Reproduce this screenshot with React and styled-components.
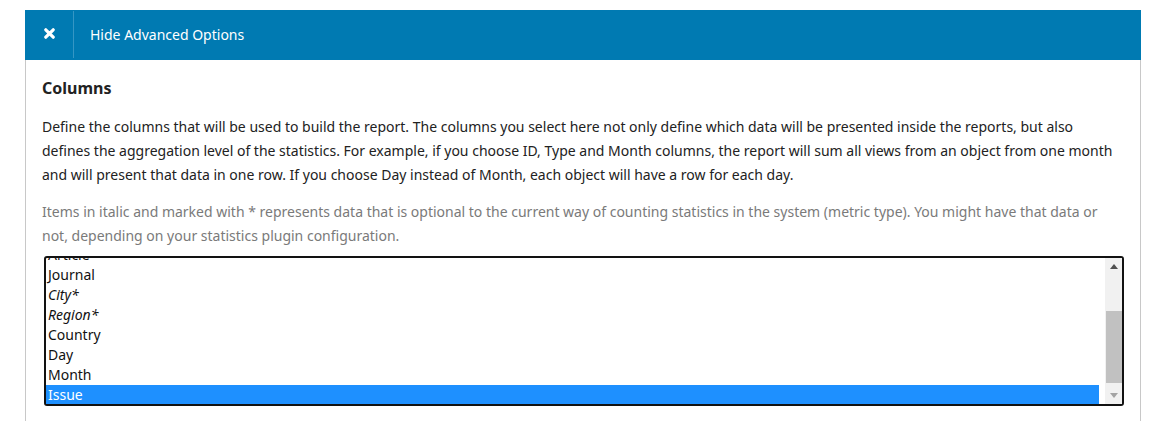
import React, { useLayoutEffect, useRef, useState } from 'react';
import styled, { createGlobalStyle } from 'styled-components';

const columns = [
    { label: 'ID' },
    { label: 'Type' },
    { label: 'Section' },
    { label: 'Article' },
    { label: 'Journal' },
    { label: 'City*', optional: true },
    { label: 'Region*', optional: true },
    { label: 'Country' },
    { label: 'Day' },
    { label: 'Month' },
    { label: 'Issue', selected: true },
];

const ROW = 20;
const ARROW = 17;
const TRACK_END = 4;

const ColumnsList = () => {
    const listRef = useRef(null);
    const [scroll, setScroll] = useState({ top: 0, view: 1, total: 1 });

    useLayoutEffect(() => {
        const el = listRef.current;
        // selected item sits at the bottom, one pixel short of the end
        el.scrollTop = el.scrollHeight - el.clientHeight - 1;
        setScroll({ top: el.scrollTop, view: el.clientHeight, total: el.scrollHeight });
    }, []);

    const track = scroll.view - ARROW * 2 - TRACK_END;
    const thumbHeight = Math.max(20, (track * scroll.view) / scroll.total);
    const maxScroll = scroll.total - scroll.view || 1;
    const thumbTop = ((track - thumbHeight) * scroll.top) / maxScroll;

    return (
        <ListBox>
            <Options ref={listRef}>
                {columns.map(col => (
                    <Option key={col.label} $italic={col.optional} $selected={col.selected}>
                        {col.label}
                    </Option>
                ))}
            </Options>
            <ScrollBar>
                <ArrowButton>
                    <svg width='8' height='5' viewBox='0 0 8 5'>
                        <polygon points='0,5 8,5 4,0' fill='#505050' />
                    </svg>
                </ArrowButton>
                <Track>
                    <Thumb style={{ top: thumbTop, height: thumbHeight }} />
                </Track>
                <ArrowButton>
                    <svg width='8' height='5' viewBox='0 0 8 5'>
                        <polygon points='0,0 8,0 4,5' fill='#a3a3a3' />
                    </svg>
                </ArrowButton>
            </ScrollBar>
        </ListBox>
    );
};

const App = () => {
    return (
        <>
            <GlobalStyle />
            <Page>
                <Panel>
                    <Header>
                        <CloseButton aria-label='Hide'>
                            <svg width='11' height='11' viewBox='0 0 11 11'>
                                <path d='M1.8 1.8 L9.2 9.2 M9.2 1.8 L1.8 9.2' stroke='#fff' strokeWidth='3.2' strokeLinecap='round' />
                            </svg>
                        </CloseButton>
                        <HeaderLabel>Hide Advanced Options</HeaderLabel>
                    </Header>
                    <Body>
                        <Title>Columns</Title>
                        <Text>
                            Define the columns that will be used to build the report. The columns you select here not only define which data will be presented inside the reports, but also defines the aggregation level of the statistics. For example, if you choose ID, Type and Month columns, the report will sum all views from an object from one month and will present that data in one row. If you choose Day instead of Month, each object will have a row for each day.
                        </Text>
                        <Text $muted>
                            Items in italic and marked with * represents data that is optional to the current way of counting statistics in the system (metric type). You might have that data or not, depending on your statistics plugin configuration.
                        </Text>
                        <ColumnsList />
                    </Body>
                </Panel>
            </Page>
        </>
    );
};

const GlobalStyle = createGlobalStyle`
    body {
        margin: 0;
        background: #fff;
        font-family: 'Noto Sans', 'Open Sans', sans-serif;
        color: #222;
    }
`;

const Page = styled.div`
    padding: 10px 24px 0 25px;
`;

const Panel = styled.section`
    display: flex;
    flex-direction: column;
`;

const Header = styled.div`
    display: flex;
    align-items: stretch;
    height: 50px;
    background: #007ab2;
    color: #fff;
`;

const CloseButton = styled.button`
    display: flex;
    align-items: center;
    justify-content: center;
    width: 49px;
    margin: 1px 0 2px;
    padding: 0 0 2px 1px;
    border: none;
    border-right: 1px solid #3596c4;
    background: transparent;
    cursor: pointer;
`;

const HeaderLabel = styled.span`
    display: flex;
    align-items: center;
    padding: 0 16px 1px;
    font-size: 14px;
`;

const Body = styled.div`
    padding: 16px 16px 20px;
    border-left: 1px solid #c8c8c8;
    border-right: 1px solid #c8c8c8;
`;

const Title = styled.h3`
    margin: 0;
    font-size: 16px;
    font-weight: 700;
    line-height: 24px;
    color: #222;
`;

const Text = styled.p`
    margin: 15px 0 0;
    font-size: 14px;
    line-height: 24px;
    color: ${p => (p.$muted ? '#7a7a7a' : '#222')};

    & + & {
        margin-top: 13px;
    }
`;

const ListBox = styled.div`
    display: flex;
    height: 146px;
    margin: 8px 0 0 2px;
    border: 2px solid #121212;
    border-radius: 3px;
    background: #fff;
`;

const Options = styled.div`
    flex: 1;
    overflow: hidden;
    padding-right: 6px;
`;

const Option = styled.div`
    height: ${ROW}px;
    padding: 0 2px;
    font-size: 14px;
    line-height: ${ROW}px;
    font-style: ${p => (p.$italic ? 'italic' : 'normal')};
    color: ${p => (p.$selected ? '#fff' : '#111')};
    background: ${p => (p.$selected ? '#1e90ff' : 'transparent')};
    white-space: nowrap;
`;

const ScrollBar = styled.div`
    display: flex;
    flex-direction: column;
    width: 17px;
    background: #f1f1f1;
`;

const ArrowButton = styled.div`
    display: flex;
    align-items: center;
    justify-content: center;
    height: ${ARROW}px;
    flex: none;
`;

const Track = styled.div`
    position: relative;
    flex: 1;
    margin-bottom: ${TRACK_END}px;
`;

const Thumb = styled.div`
    position: absolute;
    left: 1px;
    right: 0;
    background: #c1c1c1;
`;

export default App;
